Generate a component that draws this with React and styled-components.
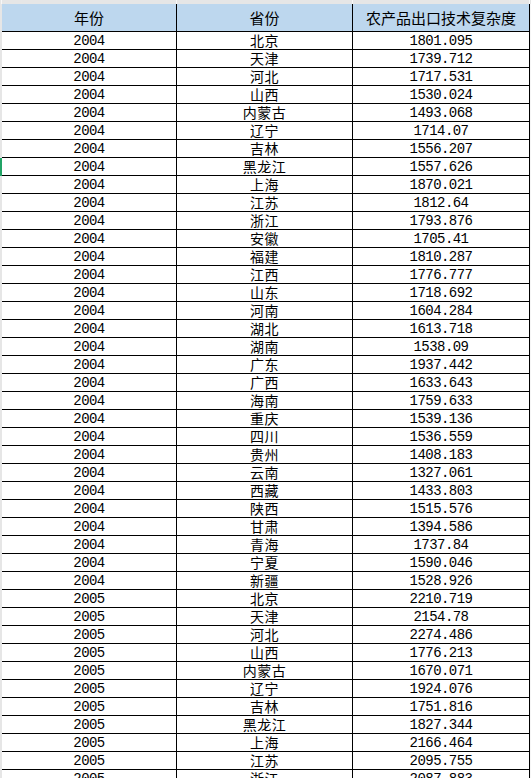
import React from "react";
import styled, { createGlobalStyle } from "styled-components";

const Global = createGlobalStyle`
  html, body { margin: 0; padding: 0; background: #ffffff; overflow: hidden; }
  body { width: 531px; height: 778px; }
`;

const COLS = "175px 176px 177px";

const rows = [
  ["2004", "北京", "1801.095"], ["2004", "天津", "1739.712"], ["2004", "河北", "1717.531"],
  ["2004", "山西", "1530.024"], ["2004", "内蒙古", "1493.068"], ["2004", "辽宁", "1714.07"],
  ["2004", "吉林", "1556.207"], ["2004", "黑龙江", "1557.626"], ["2004", "上海", "1870.021"],
  ["2004", "江苏", "1812.64"], ["2004", "浙江", "1793.876"], ["2004", "安徽", "1705.41"],
  ["2004", "福建", "1810.287"], ["2004", "江西", "1776.777"], ["2004", "山东", "1718.692"],
  ["2004", "河南", "1604.284"], ["2004", "湖北", "1613.718"], ["2004", "湖南", "1538.09"],
  ["2004", "广东", "1937.442"], ["2004", "广西", "1633.643"], ["2004", "海南", "1759.633"],
  ["2004", "重庆", "1539.136"], ["2004", "四川", "1536.559"], ["2004", "贵州", "1408.183"],
  ["2004", "云南", "1327.061"], ["2004", "西藏", "1433.803"], ["2004", "陕西", "1515.576"],
  ["2004", "甘肃", "1394.586"], ["2004", "青海", "1737.84"], ["2004", "宁夏", "1590.046"],
  ["2004", "新疆", "1528.926"], ["2005", "北京", "2210.719"], ["2005", "天津", "2154.78"],
  ["2005", "河北", "2274.486"], ["2005", "山西", "1776.213"], ["2005", "内蒙古", "1670.071"],
  ["2005", "辽宁", "1924.076"], ["2005", "吉林", "1751.816"], ["2005", "黑龙江", "1827.344"],
  ["2005", "上海", "2166.464"], ["2005", "江苏", "2095.755"], ["2005", "浙江", "2087.883"],
];

const Sheet = styled.div`
  display: flex;
  flex-direction: column;
  width: 531px;
  height: 778px;
  overflow: hidden;
`;

const ColumnStrip = styled.div`
  display: grid;
  grid-template-columns: 2px ${COLS} 1fr;
  height: 4px;
  background: #e6e6e6;
  flex: none;
`;

const StripCell = styled.div`
  border-right: 1px solid ${(p) => (p.$edge ? "transparent" : "#f7f7f7")};
  box-sizing: border-box;
`;

const Body = styled.div`
  display: flex;
  flex: 1;
  min-height: 0;
`;

const Gutter = styled.div`
  width: 2px;
  flex: none;
  display: flex;
  flex-direction: column;
  background: #e6e6e6;
`;

const GutterCell = styled.div`
  height: ${(p) => p.$h}px;
  flex: none;
  background: ${(p) => (p.$selected ? "#21a366" : "#e6e6e6")};
`;

const Table = styled.div`
  display: grid;
  grid-template-columns: ${COLS};
  grid-template-rows: 28px;
  grid-auto-rows: 18px;
  align-content: start;
  flex: none;
`;

const Cell = styled.div`
  box-sizing: border-box;
  border-right: 1px solid #000;
  border-bottom: 1px solid #000;
  display: flex;
  align-items: center;
  justify-content: center;
  color: #000;
  white-space: nowrap;
  font-family: ${(p) =>
    p.$num ? `"Liberation Mono", "DejaVu Sans Mono", monospace` : `"Noto Sans CJK SC", sans-serif`};
  font-size: ${(p) => (p.$num ? "14px" : "14px")};
  letter-spacing: ${(p) => (p.$num ? "-0.55px" : "0.5px")};
  line-height: 14px;
  padding-top: ${(p) => (p.$num ? "1px" : "0")};
  padding-bottom: ${(p) => (p.$num ? "0" : "2px")};
`;

const HeadCell = styled(Cell)`
  background: #bdd7ee;
  font-size: 15px;
  letter-spacing: 0;
  padding-top: 0;
  padding-bottom: 0;
`;

const Tail = styled.div`
  flex: 1;
  background: #f6f6f6;
`;

export default function App() {
  return (
    <>
      <Global />
      <Sheet>
        <ColumnStrip>
          <StripCell />
          <StripCell />
          <StripCell />
          <StripCell />
          <StripCell $edge />
        </ColumnStrip>
        <Body>
          <Gutter>
            <GutterCell $h={28} />
            {rows.map((r, i) => (
              <GutterCell key={i} $h={18} $selected={i === 7} />
            ))}
          </Gutter>
          <Table>
            <HeadCell>年份</HeadCell>
            <HeadCell>省份</HeadCell>
            <HeadCell>农产品出口技术复杂度</HeadCell>
            {rows.map((r, i) => (
              <React.Fragment key={i}>
                <Cell $num>{r[0]}</Cell>
                <Cell>{r[1]}</Cell>
                <Cell $num>{r[2]}</Cell>
              </React.Fragment>
            ))}
          </Table>
          <Tail />
        </Body>
      </Sheet>
    </>
  );
}
